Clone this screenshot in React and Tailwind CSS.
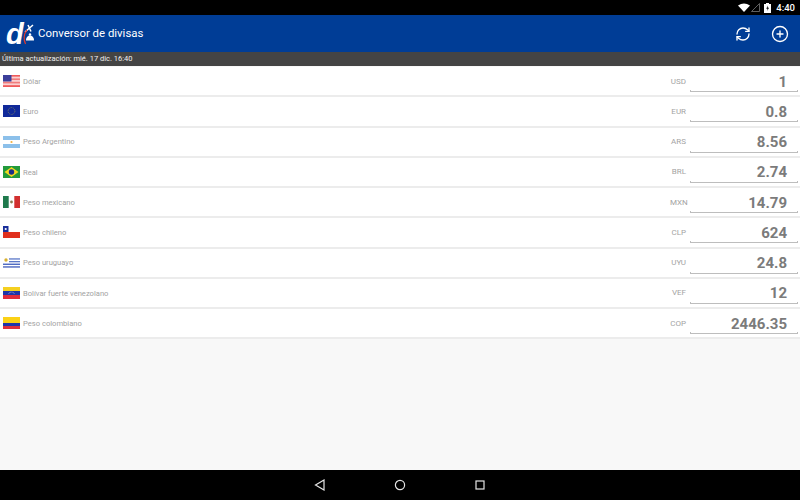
import { RefreshCw, CirclePlus } from "lucide-react";

const Flag = ({ code }) => {
  const flags = {
    USD: (
      <>
        <rect width="17" height="12" fill="#fbd0d0" />
        <rect y="0" width="17" height="1.6" fill="#ef5a5a" />
        <rect y="3.4" width="17" height="1.6" fill="#f07c7c" />
        <rect y="6.8" width="17" height="1.6" fill="#f07c7c" />
        <rect y="10.2" width="17" height="1.8" fill="#ef5a5a" />
        <rect width="8.5" height="6.5" fill="#3c3f9a" />
      </>
    ),
    EUR: (
      <>
        <rect width="17" height="12" fill="#10299a" />
        <circle cx="8.5" cy="6" r="3.4" fill="none" stroke="#8d8f5a" strokeWidth="0.8" strokeDasharray="0.9 0.8" />
      </>
    ),
    ARS: (
      <>
        <rect width="17" height="12" fill="#fff" />
        <rect width="17" height="4" fill="#8cc0ea" />
        <rect y="8" width="17" height="4" fill="#8cc0ea" />
        <circle cx="8.5" cy="6" r="1.1" fill="#f0b040" />
      </>
    ),
    BRL: (
      <>
        <rect width="17" height="12" fill="#229a3c" />
        <polygon points="8.5,1 15.5,6 8.5,11 1.5,6" fill="#f2d920" />
        <circle cx="8.5" cy="6" r="2.7" fill="#1b2f86" />
      </>
    ),
    MXN: (
      <>
        <rect width="17" height="12" fill="#fff" />
        <rect width="5.7" height="12" fill="#1f7a4d" />
        <rect x="11.3" width="5.7" height="12" fill="#d22f2f" />
        <circle cx="8.5" cy="6" r="1.4" fill="#8a7a50" />
      </>
    ),
    CLP: (
      <>
        <rect width="17" height="12" fill="#fff" />
        <rect y="6" width="17" height="6" fill="#e0301e" />
        <rect width="5.5" height="6" fill="#1a2f9a" />
        <circle cx="2.7" cy="3" r="1.1" fill="#fff" />
      </>
    ),
    UYU: (
      <>
        <rect width="17" height="12" fill="#fff" />
        <rect x="6" y="1.3" width="11" height="1.3" fill="#5c78c8" />
        <rect x="6" y="4" width="11" height="1.3" fill="#5c78c8" />
        <rect y="6.6" width="17" height="1.3" fill="#3f5cbc" />
        <rect y="9.3" width="17" height="1.3" fill="#3f5cbc" />
        <circle cx="3" cy="3" r="1.7" fill="#d8b030" />
      </>
    ),
    VEF: (
      <>
        <rect width="17" height="4" fill="#f5d020" />
        <rect y="4" width="17" height="4" fill="#1f35a8" />
        <rect y="8" width="17" height="4" fill="#e02c3c" />
        <path d="M5.5 6.8a3.5 3.5 0 0 1 6 0" fill="none" stroke="#dfe3f5" strokeWidth="0.7" strokeDasharray="0.7 0.5" />
      </>
    ),
    COP: (
      <>
        <rect width="17" height="6" fill="#fbd116" />
        <rect y="6" width="17" height="3" fill="#1f35a8" />
        <rect y="9" width="17" height="3" fill="#dc2f3c" />
      </>
    ),
  };
  return (
    <svg width="17" height="12" viewBox="0 0 17 12" className="shrink-0">
      {flags[code]}
    </svg>
  );
};

const rows = [
  { code: "USD", name: "Dólar", value: "1" },
  { code: "EUR", name: "Euro", value: "0.8" },
  { code: "ARS", name: "Peso Argentino", value: "8.56" },
  { code: "BRL", name: "Real", value: "2.74" },
  { code: "MXN", name: "Peso mexicano", value: "14.79" },
  { code: "CLP", name: "Peso chileno", value: "624" },
  { code: "UYU", name: "Peso uruguayo", value: "24.8" },
  { code: "VEF", name: "Bolívar fuerte venezolano", value: "12" },
  { code: "COP", name: "Peso colombiano", value: "2446.35" },
];

const Row = ({ code, name, value }) => (
  <div className="h-[30.25px] shrink-0 flex items-center border-b-2 border-[#ececec] pl-[3px] pr-[2px] bg-white">
    <Flag code={code} />
    <span className="ml-[3px] pt-[1px] text-[7.6px] text-[#a3a3a3] flex-1">{name}</span>
    <span className="pt-[1px] text-[8px] text-[#a3a3a3] w-[16px] mr-[4px] text-right">{code}</span>
    <div className="relative w-[108px] h-[26px] flex items-center justify-end pr-[11px] pt-[2px]">
      <span className="text-[15px] font-bold text-[#7b7b7b] leading-none">{value}</span>
      <div className="absolute left-0 right-0 bottom-[2px] h-[2px] border-b border-x border-[#bdbdbd]" />
    </div>
  </div>
);

export default function App() {
  return (
    <div className="w-[800px] h-[500px] flex flex-col bg-[#f8f8f8] overflow-hidden antialiased font-['Roboto',sans-serif]">
      <div className="h-[15px] shrink-0 bg-black flex items-center justify-end pr-[5px] text-white">
        <svg width="12" height="9" viewBox="0 0 12 9">
          <path d="M0 2.6Q6 -1.4 12 2.6L6 9z" fill="#fff" />
        </svg>
        <svg width="9" height="9" viewBox="0 0 9 9" className="ml-[1px]">
          <polygon points="0.5,8.5 8.5,8.5 8.5,0.5" fill="none" stroke="#777" strokeWidth="0.8" />
        </svg>
        <svg width="7" height="10" viewBox="0 0 7 10" className="ml-[4px]">
          <rect x="0" y="1" width="7" height="9" fill="#fff" />
          <rect x="2" y="0" width="3" height="1" fill="#fff" />
          <path d="M3.8 2.5 2.3 5.8h1.3L3.2 8 5 4.8H3.7z" fill="#000" />
        </svg>
        <span className="text-[9.5px] font-medium ml-[5px] pt-[1px] leading-none">4:40</span>
      </div>

      <div className="h-[37px] shrink-0 bg-[#003d96] flex items-center text-white">
        <div className="relative w-[30px] h-[37px] ml-[7px]">
          <span className="absolute left-[-1px] top-[5px] text-[29px] leading-none italic font-bold font-['Liberation_Sans',sans-serif]">d</span>
          <svg width="14" height="24" viewBox="0 0 14 24" className="absolute left-[15px] top-[8px]">
            <path d="M3 9 11 2M6 2l3 6.5" stroke="#fff" strokeWidth="1.5" fill="none" />
            <path d="M5 7C1.5 11 1.5 17 3.5 21" stroke="#e0392e" strokeWidth="1.2" fill="none" />
            <path d="M4 17.5C4 14 6 12.5 8 12.5S12 14 12 17.5z" fill="#fff" />
            <circle cx="8" cy="11.5" r="1.2" fill="#fff" />
          </svg>
        </div>
        <span className="ml-[1px] text-[11.4px] leading-none">Conversor de divisas</span>
        <div className="ml-auto flex items-center">
          <RefreshCw size={16} strokeWidth={2} className="mr-[20px]" />
          <CirclePlus size={18} strokeWidth={1.8} className="mr-[11px]" />
        </div>
      </div>

      <div className="h-[14px] shrink-0 bg-[#444444] flex items-center pl-[2px] text-[7.5px] text-[#f0f0f0] leading-none">
        Última actualización: mié. 17 dic. 16:40
      </div>

      <div className="flex-1 flex flex-col pt-[1px] bg-[#f8f8f8]">
        {rows.map((r) => (
          <Row key={r.code} {...r} />
        ))}
      </div>

      <div className="h-[30px] shrink-0 bg-black flex items-center justify-center gap-[68px]">
        <svg width="12" height="12" viewBox="0 0 12 12">
          <polygon points="10,1 1.5,6 10,11" fill="none" stroke="#e4e4e4" strokeWidth="1.2" />
        </svg>
        <svg width="12" height="12" viewBox="0 0 12 12">
          <circle cx="6" cy="6" r="4.6" fill="none" stroke="#e4e4e4" strokeWidth="1.2" />
        </svg>
        <svg width="12" height="12" viewBox="0 0 12 12">
          <rect x="2" y="2" width="8" height="8" fill="none" stroke="#e4e4e4" strokeWidth="1.2" />
        </svg>
      </div>
    </div>
  );
}
